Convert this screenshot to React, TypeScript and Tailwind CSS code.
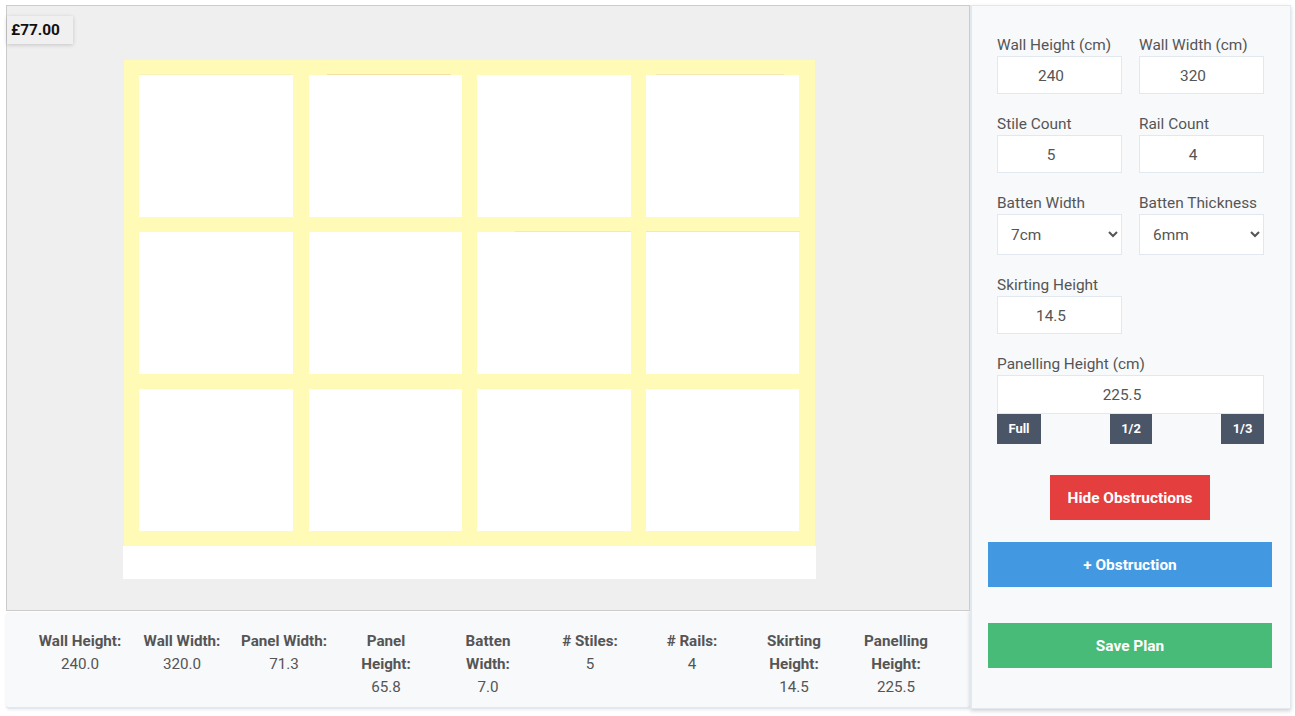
// faint paint lines along the top of some panels
const streaks = [
  { left: "left-0", width: "w-[154px]", tone: "bg-[#fbf2b8]" },
  { left: "left-[18px]", width: "w-[124px]", tone: "bg-[#f6dfa4]" },
  null,
  { left: "left-[10px]", width: "w-[128px]", tone: "bg-[#f6e8b4]" },
  null,
  null,
  { left: "left-[38px]", width: "w-[116px]", tone: "bg-[#f6e8b4]" },
  { left: "left-0", width: "w-[154px]", tone: "bg-[#f6e8b4]" },
  null,
  null,
  null,
  null,
];

const stats = [
  { label: "Wall Height:", value: "240.0" },
  { label: "Wall Width:", value: "320.0" },
  { label: "Panel Width:", value: "71.3" },
  { label: "Panel Height:", value: "65.8" },
  { label: "Batten Width:", value: "7.0" },
  { label: "# Stiles:", value: "5" },
  { label: "# Rails:", value: "4" },
  { label: "Skirting Height:", value: "14.5" },
  { label: "Panelling Height:", value: "225.5" },
];

const Field = ({ label, value }: { label: string; value: string }) => (
  <label className="block w-[125px]">
    <span className="block h-[23px] text-[15.4px] leading-[25px] whitespace-nowrap">{label}</span>
    <input
      readOnly
      value={value}
      className="block h-[38px] w-full border border-[#e2e8f0] bg-white pt-[2px] pr-[17px] text-center text-[15.4px] text-[#555] outline-none"
    />
  </label>
);

const SelectField = ({ label, value }: { label: string; value: string }) => (
  <label className="block w-[125px]">
    <span className="block h-[23px] text-[15.4px] leading-[25px] whitespace-nowrap">{label}</span>
    <select
      defaultValue={value}
      className="block h-[41px] w-full border border-[#e2e8f0] bg-white pl-[9px] text-[15.4px] text-[#555] outline-none"
    >
      <option>{value}</option>
    </select>
  </label>
);

export default function App() {
  return (
    <div className="flex h-[716px] w-[1295px] items-start overflow-hidden bg-white pt-[5px] pl-[6px] font-['Roboto',sans-serif] text-[#555]">
      {/* main column */}
      <div className="w-[964px]">
        {/* drawing area */}
        <div className="relative flex h-[606px] flex-col items-start border border-[#cbcbcb] bg-[#efefef] pt-[54px] pl-[116px]">
          <div className="absolute top-[10px] left-0 flex h-[28px] w-[66px] items-center bg-[#f0f0f0] pt-[2px] pl-[4px] text-[15.4px] font-bold text-[#111] shadow-[0_1px_4px_rgba(0,0,0,0.18)]">
            £77.00
          </div>
          <div className="ml-px grid h-[486px] w-[691px] grid-cols-4 grid-rows-3 gap-[15px] bg-[#fffab5] p-[15px]">
            {streaks.map((streak, i) => (
              <div key={i} className={`relative bg-white ${i % 4 === 1 ? "ml-px" : ""} ${i % 4 === 3 ? "mr-px" : ""}`}>
                {streak && <div className={`absolute -top-px h-px ${streak.left} ${streak.width} ${streak.tone}`} />}
              </div>
            ))}
          </div>
          <div className="h-[33px] w-[693px] bg-white" />
        </div>

        {/* stats */}
        <div className="mt-px grid h-[97px] grid-cols-9 rounded-[4px] border-b-2 border-[#e2e8f0] bg-[#f8f9fb] px-[23px] pt-[18px] text-center text-[15.2px] leading-[23px] shadow-[0_1px_3px_rgba(0,0,0,0.08)]">
          {stats.map((s) => (
            <div key={s.label} className="px-[6px]">
              <div className="font-bold">{s.label}</div>
              <div>{s.value}</div>
            </div>
          ))}
        </div>
      </div>

      {/* sidebar */}
      <div className="flex h-[704px] w-[321px] flex-col border border-l-2 border-[#e2e8f0] bg-[#f8f9fb] pt-[27px] pr-[18px] pl-[16px] shadow-[0_2px_4px_rgba(0,0,0,0.18)]">
        <div className="flex flex-col pr-[8px] pl-[9px]">
          <div className="flex justify-between">
            <Field label="Wall Height (cm)" value="240" />
            <Field label="Wall Width (cm)" value="320" />
          </div>
          <div className="mt-[18px] flex justify-between">
            <Field label="Stile Count" value="5" />
            <Field label="Rail Count" value="4" />
          </div>
          <div className="mt-[18px] flex justify-between">
            <SelectField label="Batten Width" value="7cm" />
            <SelectField label="Batten Thickness" value="6mm" />
          </div>
          <div className="mt-[18px]">
            <Field label="Skirting Height" value="14.5" />
          </div>
          <label className="mt-[18px] block">
            <span className="block h-[23px] text-[15.4px] leading-[25px]">Panelling Height (cm)</span>
            <input
              readOnly
              value="225.5"
              className="block h-[39px] w-full border border-[#e2e8f0] bg-white pr-[17px] text-center text-[15.4px] text-[#555] outline-none"
            />
          </label>
          <div className="flex justify-between">
            <button className="h-[30px] w-[44px] bg-[#4a5568] text-[13px] font-bold text-white">Full</button>
            <button className="h-[30px] w-[42px] bg-[#4a5568] text-[13px] font-bold text-white">1/2</button>
            <button className="h-[30px] w-[43px] bg-[#4a5568] text-[13px] font-bold text-white">1/3</button>
          </div>
        </div>

        <button className="mx-auto mt-[31px] h-[45px] w-[160px] bg-[#e53e3e] pt-[2px] text-[15.4px] font-bold text-white">
          Hide Obstructions
        </button>
        <button className="mt-[22px] h-[45px] w-full bg-[#4299e1] pt-[2px] text-[15.4px] font-bold text-white">
          + Obstruction
        </button>
        <button className="mt-[36px] h-[45px] w-full bg-[#48bb78] pt-[2px] text-[15.4px] font-bold text-white">
          Save Plan
        </button>
      </div>
    </div>
  );
}
